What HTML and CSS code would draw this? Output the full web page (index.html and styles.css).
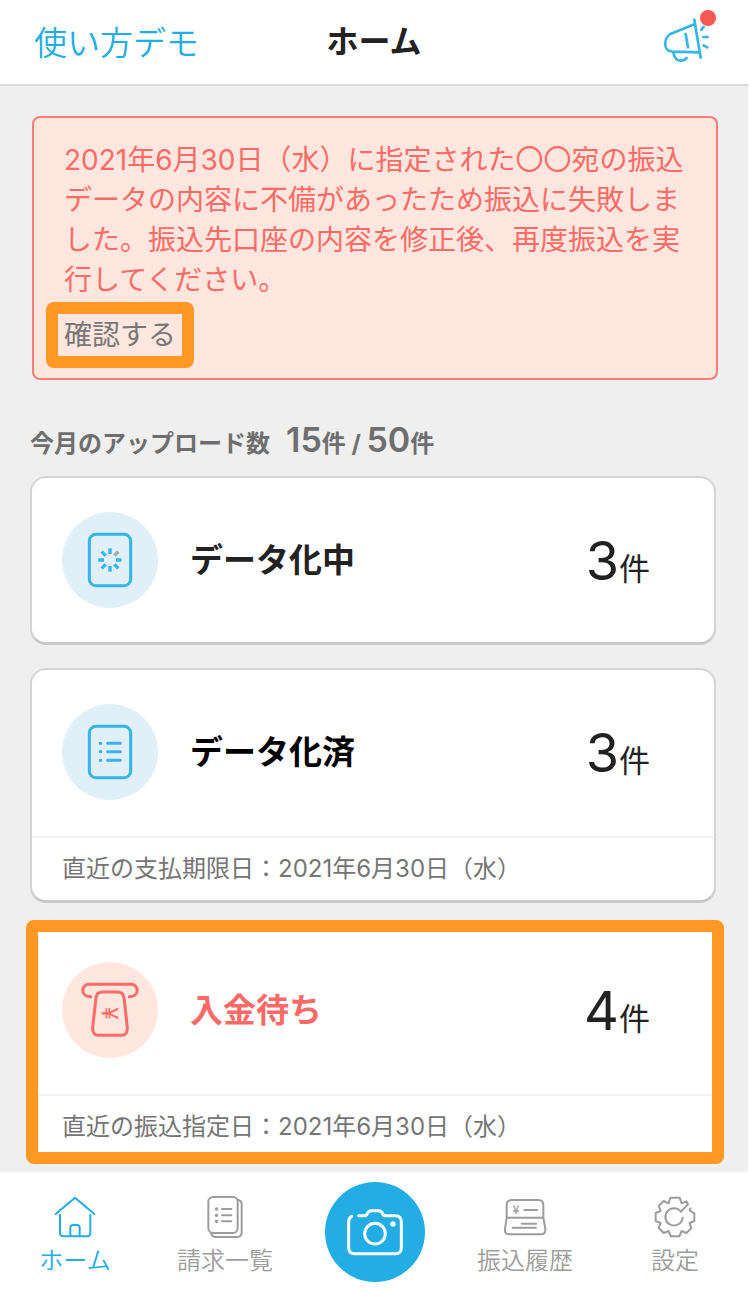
FILE: index.html
```
<!DOCTYPE html>
<html lang="ja">
<head>
  <meta charset="utf-8">
  <meta name="viewport" content="width=device-width, initial-scale=1.0">
  <title>ホーム</title>
  <link rel="stylesheet" href="styles.css">
</head>
<body>
  <header class="header">
    <a href="#demo" class="demo-link">使い方デモ</a>
    <h1>ホーム</h1>
    <button type="button" class="news-button" aria-label="お知らせ">
      <svg class="icon" viewBox="0 0 180 180">
        <path d="M105 57 L33 86 C12 96 6 138 38 140 L120 142 M103 44 L122 158 M77 87 L84 127 M40 143 Q45 167 63 167 Q74 167 80 159"/>
        <path d="M124 74 L131 66 M130 96 H143 M131 121 L142 127"/>
        <circle class="badge" cx="144" cy="39" r="24"/>
      </svg>
    </button>
  </header>

  <main class="main">
    <section class="alert">
      <p>2021年6月30日（水）に指定された〇〇宛の振込<br>データの内容に不備があったため振込に失敗しま<br>した。振込先口座の内容を修正後、再度振込を実<br>行してください。</p>
      <button type="button" class="confirm">確認する</button>
    </section>

    <h2 class="upload-count">今月のアップロード数<span class="counts"><b>15</b>件 / <b>50</b>件</span></h2>

    <div class="cards">
      <a href="#processing" class="card">
        <div class="card-body">
          <span class="card-icon">
            <svg class="icon" viewBox="0 0 288 288">
              <rect x="82" y="67" width="124" height="154" rx="20"/>
              <path class="spinner" d="M144 126 V109 M162 144 H179 M144 162 V179 M126 144 H109 M157 157 L169 169 M131 157 L119 169 M131 131 L119 119"/>
              <path class="spinner faded" d="M157 131 L169 119"/>
            </svg>
          </span>
          <h3>データ化中</h3>
          <p class="number"><b>3</b>件</p>
        </div>
      </a>

      <a href="#done" class="card done">
        <div class="card-body">
          <span class="card-icon">
            <svg class="icon" viewBox="0 0 288 288">
              <rect x="82" y="67" width="124" height="154" rx="20"/>
              <path d="M137 118 H175 M137 143 H175 M137 169 H175"/>
              <path class="dots" d="M115 118 h1 M115 143 h1 M115 169 h1"/>
            </svg>
          </span>
          <h3>データ化済</h3>
          <p class="number"><b>3</b>件</p>
        </div>
        <p class="card-footer">直近の支払期限日：2021年6月30日（水）</p>
      </a>

      <a href="#waiting" class="card waiting">
        <div class="card-body">
          <span class="card-icon">
            <svg class="icon" viewBox="0 0 288 288">
              <path d="M86 104 C54 104 56 67 82 67 H206 C232 67 234 104 202 104"/>
              <path d="M122 90 H166 Q184 90 186 107 L196 196 Q197 220 178 220 H110 Q91 220 92 196 L102 107 Q104 90 122 90"/>
              <text class="yen" x="144" y="178" font-size="66" text-anchor="middle" transform="rotate(90 144 154)">¥</text>
            </svg>
          </span>
          <h3>入金待ち</h3>
          <p class="number"><b>4</b>件</p>
        </div>
        <p class="card-footer">直近の振込指定日：2021年6月30日（水）</p>
      </a>
    </div>
  </main>

  <nav class="tabs">
    <a href="#home" class="tab active">
      <svg class="icon" viewBox="0 0 132 132">
        <path d="M8 57 L66 8 L124 57 M21 60 V114 Q21 124 31 124 H103 Q112 124 112 114 V60 M52 124 V98 Q52 90 60 90 H72 Q80 90 80 98 V124"/>
      </svg>
      ホーム
    </a>
    <a href="#invoices" class="tab">
      <svg class="icon" viewBox="0 0 132 132">
        <rect x="16" y="6" width="88" height="108" rx="14"/>
        <path d="M104 14 Q116 16 116 28 V112 Q116 126 102 126 H40 Q26 126 24 114 M57 42 H85 M57 61 H85 M57 79 H85"/>
        <path class="dots" d="M40 42 h1 M40 61 h1 M40 79 h1"/>
      </svg>
      請求一覧
    </a>
    <button type="button" class="camera" aria-label="撮影">
      <svg class="icon" viewBox="0 0 300 300">
        <path d="M80 103 Q71 107 71 120 V197 Q71 215 89 215 H211 Q229 215 229 197 V119 Q229 101 211 101 H181 Q175 101 173 95 Q170 86 160 86 H140 Q130 86 127 95 Q125 101 119 101 H101"/>
        <circle cx="150" cy="155" r="31"/>
        <circle class="lamp" cx="204" cy="126" r="8"/>
      </svg>
    </button>
    <a href="#history" class="tab">
      <svg class="icon" viewBox="0 0 132 132">
        <path d="M11 68 V30 Q11 15 26 15 H106 Q121 15 121 30 V68 L127 102 Q128 118 114 118 H18 Q4 118 6 102 L11 68 H121"/>
        <path d="M64 45 H103 M56 86 H99 M29 98 H99"/>
        <text class="yen" x="39" y="56" font-size="36" text-anchor="middle">¥</text>
      </svg>
      振込履歴
    </a>
    <a href="#settings" class="tab">
      <svg class="icon" viewBox="0 0 132 132">
        <path d="M112 40 L110 46 L124 55 V78 L110 84 L115 100 L100 114 L86 108 L79 124 H53 L47 108 L32 114 L17 99 L23 84 L8 78 V54 L23 48 L17 33 L32 18 L47 25 L52 8 H80 L86 25 L100 19 L105 28 L84 50 A26 26 0 1 0 89 68"/>
      </svg>
      設定
    </a>
  </nav>
</body>
</html>
```

FILE: styles.css
```
* {
    box-sizing: border-box;
}
body {
    display: flex;
    flex-direction: column;
    min-height: 100vh;
    margin: 0;
    padding-right: 2px;
    background-color: #fff;
    color: #222;
    font-family: Inter, "Noto Sans CJK JP", sans-serif;
}
h1, h2, h3, p {
    margin: 0;
}
a {
    color: inherit;
    text-decoration: none;
}
button {
    border: 0;
    padding: 0;
    background: none;
    font-family: inherit;
    cursor: pointer;
}
.icon {
    display: block;
    fill: none;
    stroke: currentColor;
    stroke-width: 6;
    stroke-linecap: round;
    stroke-linejoin: round;
}
.yen {
    fill: currentColor;
    font-family: "Noto Sans CJK JP", sans-serif;
    stroke-width: 1;
}

/* Header */
.header {
    display: grid;
    grid-template-columns: 1fr auto 1fr;
    align-items: center;
    height: 86px;
    padding: 0 28px;
    border-bottom: 2px solid #d9d9d9;
}
.header h1 {
    font-size: 32px;
    line-height: 48px;
}
.demo-link {
    padding: 2px 0 0 6px;
    color: #22ade5;
    font-size: 33px;
    font-weight: 350;
    line-height: 48px;
}
.news-button {
    align-self: start;
    justify-self: end;
    padding-top: 5px;
    color: #35b5e9;
}
.news-button .icon {
    width: 60px;
    height: 60px;
    stroke-width: 8;
}
.news-button .badge {
    fill: #f65a55;
    stroke: none;
}

/* Main */
.main {
    flex: 1;
    padding: 30px 30px 8px;
    background-color: #efefef;
}
.alert {
    margin: 0 0 0 2px;
    padding: 22px 0 10px 30px;
    border: 2px solid #f87c78;
    border-radius: 8px;
    background-color: #ffe6de;
    color: #fa6b67;
    font-size: 28px;
    line-height: 40px;
}
.confirm {
    display: block;
    margin: 2px 0 0 -18px;
    padding: 0 6px;
    border: 12px solid #ff9924;
    border-radius: 8px;
    color: #777;
    font-size: 28px;
    line-height: 42px;
}
.upload-count {
    margin: 44px 0 12px;
    color: #6e6e6e;
    font-size: 24px;
    line-height: 40px;
}
.counts {
    margin-left: 16px;
}
.counts b {
    font-size: 34px;
    font-weight: 600;
    line-height: 32px;
}

/* Cards */
.cards {
    display: flex;
    flex-direction: column;
    gap: 24px;
    margin-right: 2px;
}
.card {
    border: 2px solid #d4d4d4;
    border-bottom-color: #c9c9c9;
    border-radius: 16px;
    background-color: #fff;
    box-shadow: 0 1px 0 #c9c9c9;
}
.card-body {
    display: flex;
    align-items: center;
    gap: 32px;
    height: 164px;
    padding: 0 64px 0 30px;
}
.card-icon {
    border-radius: 50%;
    background-color: #e0eff8;
    color: #35b5e9;
}
.card-icon .icon {
    width: 96px;
    height: 96px;
    stroke-width: 9;
}
.icon .spinner {
    stroke-width: 10;
    stroke-linecap: butt;
}
.icon .faded {
    stroke: #a3abb0;
}
.icon .dots {
    stroke-width: 10;
}
.card h3 {
    flex: 1;
    font-size: 33px;
    line-height: 48px;
}
.number {
    padding-top: 10px;
    font-size: 31px;
    line-height: 60px;
}
.number b {
    font-size: 54px;
    font-weight: 400;
}
.card-footer {
    margin-top: 2px;
    padding: 0 30px;
    border-top: 2px solid #f1f1f1;
    color: #757575;
    font-size: 24px;
    line-height: 62px;
}
.done h3 {
    color: #000;
}
.waiting {
    margin: -6px -8px 0 -4px;
    border: 12px solid #ff9924;
    border-radius: 8px;
    box-shadow: none;
}
.waiting .card-body {
    height: 160px;
    padding: 0 62px 4px 24px;
}
.waiting .card-icon {
    background-color: #ffe6de;
    color: #fa6b67;
}
.waiting h3 {
    color: #fa6b67;
}
.waiting .card-footer {
    padding: 6px 24px 0;
    line-height: 50px;
}

/* Bottom tabs */
.tabs {
    display: grid;
    grid-template-columns: repeat(5, 1fr);
    justify-items: center;
    align-items: center;
    height: 120px;
    margin-right: -2px;
}
.tab {
    padding-top: 14px;
    color: #9d9d9d;
    font-size: 24px;
    font-weight: 350;
    line-height: 44px;
    text-align: center;
}
.tab .icon {
    width: 44px;
    height: 44px;
    margin: 0 auto;
}
.active {
    color: #22ade5;
}
.camera {
    width: 100px;
    height: 100px;
    border-radius: 50%;
    background-color: #22ade5;
    color: #fff;
}
.camera .icon {
    width: 100px;
    height: 100px;
    stroke-width: 9;
}
.icon .lamp {
    fill: currentColor;
    stroke: none;
}
```
